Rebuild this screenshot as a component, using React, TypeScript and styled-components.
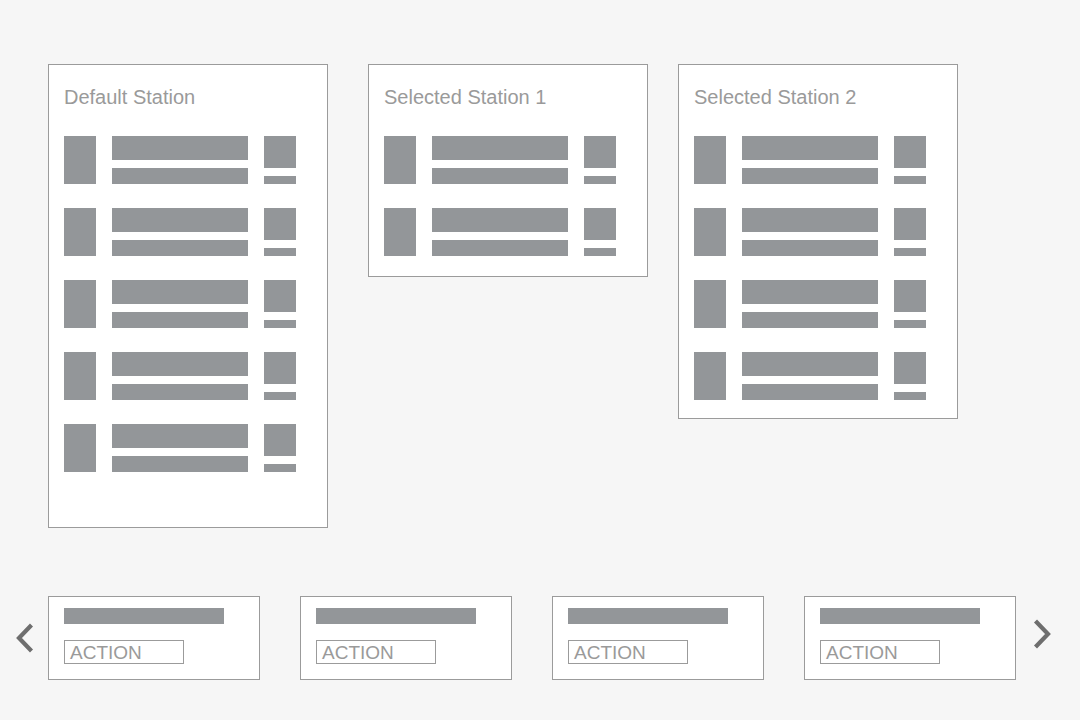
import React from "react";
import styled, { createGlobalStyle } from "styled-components";

const GlobalStyle = createGlobalStyle`
  html, body {
    margin: 0;
    padding: 0;
    background: #f6f6f6;
    font-family: "Liberation Sans", Arial, Helvetica, sans-serif;
  }
  * { box-sizing: border-box; }
`;

const GRAY = "#939699";
const BORDER = "#9b9b9b";

const Page = styled.div`
  width: 1080px;
  height: 720px;
  padding-top: 64px;
  display: flex;
  flex-direction: column;
  overflow: hidden;
`;

const StationRow = styled.div`
  display: flex;
  align-items: flex-start;
  height: 532px;
`;

const StationCard = styled.section<{ $height: number; $left: number }>`
  width: 280px;
  height: ${(p) => p.$height}px;
  margin-left: ${(p) => p.$left}px;
  background: #fff;
  border: 1px solid ${BORDER};
  padding: 20px 16px 0 15px;
  display: flex;
  flex-direction: column;
`;

const StationTitle = styled.h2`
  margin: 0 0 27px 0;
  font-size: 20px;
  line-height: 24px;
  font-weight: 400;
  color: #9a9a9a;
`;

const RowList = styled.div`
  display: flex;
  flex-direction: column;
  gap: 24px;
`;

const ListRow = styled.div`
  display: flex;
  gap: 16px;
  height: 48px;
`;

const Thumb = styled.div`
  width: 32px;
  height: 48px;
  background: ${GRAY};
`;

const Column = styled.div<{ $width: number }>`
  width: ${(p) => p.$width}px;
  display: flex;
  flex-direction: column;
  gap: 8px;
`;

const Bar = styled.div<{ $h: number; $w?: number }>`
  height: ${(p) => p.$h}px;
  width: ${(p) => (p.$w ? `${p.$w}px` : "100%")};
  background: ${GRAY};
`;

const Carousel = styled.div`
  display: flex;
  align-items: center;
  height: 84px;
`;

const ChevronButton = styled.div<{ $shift: number; $dx: number }>`
  width: 48px;
  height: 84px;
  display: flex;
  align-items: center;
  justify-content: center;
  transform: translate(${(p) => p.$dx}px, ${(p) => p.$shift}px);
`;

const Cards = styled.div`
  display: flex;
  gap: 40px;
`;

const ActionCard = styled.div`
  width: 212px;
  height: 84px;
  background: #fff;
  border: 1px solid ${BORDER};
  padding: 11px 15px 0 15px;
  display: flex;
  flex-direction: column;
  gap: 16px;
`;

const ActionButton = styled.div`
  width: 120px;
  height: 24px;
  border: 1px solid ${BORDER};
  color: #9a9a9a;
  font-size: 19px;
  line-height: 23px;
  padding-left: 5px;
`;

const Chevron = ({ dir }: { dir: "left" | "right" }) => (
  <svg width="20" height="32" viewBox="0 0 20 32">
    <polyline
      points={dir === "left" ? "16.5,3 4,16 16.5,29" : "3.5,3 16,16 3.5,29"}
      fill="none"
      stroke="#6e6e6e"
      strokeWidth="4.2"
    />
  </svg>
);

const Station = ({
  title,
  rows,
  height,
  left,
}: {
  title: string;
  rows: number;
  height: number;
  left: number;
}) => (
  <StationCard $height={height} $left={left}>
    <StationTitle>{title}</StationTitle>
    <RowList>
      {Array.from({ length: rows }).map((_, i) => (
        <ListRow key={i}>
          <Thumb />
          <Column $width={136}>
            <Bar $h={24} />
            <Bar $h={16} />
          </Column>
          <Column $width={32}>
            <Bar $h={32} />
            <Bar $h={8} />
          </Column>
        </ListRow>
      ))}
    </RowList>
  </StationCard>
);

export default function App() {
  return (
    <>
      <GlobalStyle />
      <Page>
        <StationRow>
          <Station title="Default Station" rows={5} height={464} left={48} />
          <Station title="Selected Station 1" rows={2} height={213} left={40} />
          <Station title="Selected Station 2" rows={4} height={355} left={30} />
        </StationRow>
        <Carousel>
          <ChevronButton $shift={0} $dx={1}>
            <Chevron dir="left" />
          </ChevronButton>
          <Cards>
            {[0, 1, 2, 3].map((i) => (
              <ActionCard key={i}>
                <Bar $h={16} $w={160} />
                <ActionButton>ACTION</ActionButton>
              </ActionCard>
            ))}
          </Cards>
          <ChevronButton $shift={-4} $dx={2}>
            <Chevron dir="right" />
          </ChevronButton>
        </Carousel>
      </Page>
    </>
  );
}
